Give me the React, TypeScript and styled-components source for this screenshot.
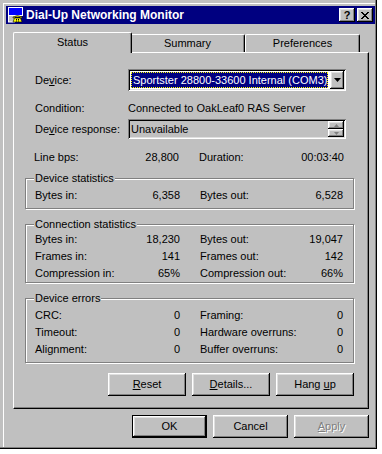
import React from "react";
import styled, { createGlobalStyle } from "styled-components";

const GlobalStyle = createGlobalStyle`
  html, body { margin: 0; padding: 0; background: #fff; }
  body {
    font-family: "Liberation Sans", Arial, sans-serif;
    font-size: 11px;
    color: #000;
  }
  * { box-sizing: border-box; }
`;

const raised = `
  box-shadow: inset -1px -1px #000, inset 1px 1px #fff,
    inset -2px -2px #808080, inset 2px 2px #dfdfdf;
`;
const sunken = `
  box-shadow: inset 1px 1px #808080, inset -1px -1px #fff,
    inset 2px 2px #000, inset -2px -2px #dfdfdf;
`;

const Window = styled.div`
  width: 377px;
  height: 449px;
  background: #c0c0c0;
  padding: 6px 2px 0 6px;
  display: flex;
  flex-direction: column;
  box-shadow: inset -1px -1px #000, inset -2px -2px #808080,
    inset 3px 3px #c0c0c0, inset 4px 4px #fff;
`;

const TitleBar = styled.div`
  height: 18px;
  background: #000080;
  color: #fff;
  display: flex;
  align-items: center;
  padding: 0 2px 0 2px;
`;

const TitleText = styled.span`
  flex: 1;
  margin-left: 2px;
  font-weight: bold;
  font-size: 12px;
  line-height: 18px;
  white-space: nowrap;
`;

const CaptionButton = styled.div<{ $gap?: boolean }>`
  width: 16px;
  height: 14px;
  background: #c0c0c0;
  color: #000;
  margin-left: ${(p) => (p.$gap ? 2 : 0)}px;
  display: flex;
  align-items: center;
  justify-content: center;
  font-weight: bold;
  font-size: 11px;
  line-height: 14px;
  ${raised}
`;

const Client = styled.div`
  flex: 1;
  display: flex;
  flex-direction: column;
  padding: 0 6px 0 7px;
`;

const TabStrip = styled.div`
  display: flex;
  align-items: flex-end;
  height: 20px;
  margin-top: 8px;
  padding-left: 2px;
  position: relative;
  z-index: 1;
`;

const Tab = styled.div<{ $active?: boolean }>`
  position: relative;
  z-index: ${(p) => (p.$active ? 2 : 1)};
  width: ${(p) => (p.$active ? 119 : 115)}px;
  height: ${(p) => (p.$active ? 21 : 18)}px;
  margin: ${(p) => (p.$active ? "0 -2px -1px -2px" : "0")};
  padding-bottom: ${(p) => (p.$active ? 1 : 0)}px;
  background: #c0c0c0;
  border-top: 1px solid #fff;
  border-left: 1px solid #fff;
  border-right: 1px solid #000;
  border-radius: 2px 2px 0 0;
  box-shadow: inset -1px 0 #808080;
  display: flex;
  align-items: center;
  justify-content: center;
  line-height: 13px;
`;

const Panel = styled.div`
  height: 357px;
  background: #c0c0c0;
  border-top: 1px solid #fff;
  border-left: 1px solid #fff;
  border-right: 1px solid #000;
  border-bottom: 1px solid #000;
  box-shadow: inset -1px -1px #808080;
  padding: 0 14px 0 11px;
  display: flex;
  flex-direction: column;
`;

const FieldRow = styled.div<{ $mt: number; $h: number }>`
  display: flex;
  align-items: center;
  height: ${(p) => p.$h}px;
  margin-top: ${(p) => p.$mt}px;
`;

const FieldLabel = styled.div`
  width: 103px;
  flex: none;
  padding-left: 10px;
  white-space: nowrap;
`;

const Combo = styled.div`
  width: 218px;
  height: 22px;
  padding: 2px;
  background: #fff;
  display: flex;
  ${sunken}
`;

const ComboField = styled.div`
  flex: 1;
  padding: 1px 2px 1px 1px;
  display: flex;
`;

const Selection = styled.div`
  flex: 1;
  background: #000080;
  color: #fff;
  border: 1px dotted #ffff00;
  padding-left: 1px;
  line-height: 14px;
  white-space: nowrap;
  overflow: hidden;
`;

const DropButton = styled.div`
  width: 16px;
  height: 18px;
  background: #c0c0c0;
  display: flex;
  align-items: center;
  justify-content: center;
  ${raised}
`;

const ReadOnlyBox = styled.div`
  width: 218px;
  height: 20px;
  padding: 2px 2px 2px 3px;
  background: #c0c0c0;
  display: flex;
  align-items: center;
  ${sunken}
`;

const ReadOnlyText = styled.span`
  flex: 1;
  line-height: 16px;
`;

const Spinner = styled.div`
  display: flex;
  flex-direction: column;
  width: 16px;
`;

const SpinButton = styled.div`
  height: 8px;
  background: #c0c0c0;
  display: flex;
  align-items: center;
  justify-content: center;
  ${raised}
`;

const StatGrid = styled.div<{ $mt?: number }>`
  display: grid;
  grid-template-columns: 145px 1fr;
  column-gap: 20px;
  margin-top: ${(p) => p.$mt ?? 0}px;
  padding: 0 10px 0 9px;
`;

const Pair = styled.div`
  display: flex;
  justify-content: space-between;
  height: 17px;
  line-height: 17px;
  white-space: nowrap;
`;

const Group = styled.section<{ $mt: number; $pb: number }>`
  margin-top: ${(p) => p.$mt}px;
  border: 1px solid #808080;
  box-shadow: inset 1px 1px #fff, 1px 1px #fff;
  padding: 0 0 ${(p) => p.$pb}px 0;
  display: flex;
  flex-direction: column;
`;

const GroupTitle = styled.div<{ $gap: number }>`
  align-self: flex-start;
  margin: -7px 0 ${(p) => p.$gap}px 8px;
  padding: 0 1px;
  background: #c0c0c0;
  line-height: 13px;
  white-space: nowrap;
`;

const ButtonRow = styled.div<{ $mt: number }>`
  display: flex;
  justify-content: flex-end;
  gap: 6px;
  margin-top: ${(p) => p.$mt}px;
`;

const Button = styled.div<{ $w: number; $default?: boolean; $disabled?: boolean }>`
  width: ${(p) => p.$w}px;
  height: 23px;
  background: #c0c0c0;
  display: flex;
  align-items: center;
  justify-content: center;
  line-height: 13px;
  white-space: pre;
  color: ${(p) => (p.$disabled ? "#808080" : "#000")};
  text-shadow: ${(p) => (p.$disabled ? "1px 1px #fff" : "none")};
  box-shadow: ${(p) =>
    p.$default
      ? "inset 0 0 0 1px #000, inset -2px -2px #000, inset 2px 2px #fff, inset -3px -3px #808080, inset 3px 3px #dfdfdf"
      : "inset -1px -1px #000, inset 1px 1px #fff, inset -2px -2px #808080, inset 2px 2px #dfdfdf"};
`;

const AppIcon = () => (
  <svg width="16" height="16" viewBox="0 0 16 16" style={{ flex: "none" }}>
    <rect x="0.5" y="0.5" width="14" height="8" fill="#0000ff" stroke="#fff" />
    <rect x="0.5" y="8.5" width="6" height="6.5" fill="#c0c0c0" stroke="#fff" />
    <path d="M5 10 Q9.5 7 14 10 L14 11 L12 11 L12 10 L7 10 L7 11 L5 11 Z" fill="#ffff00" stroke="#000" strokeWidth="0.6" />
    <path d="M6.5 11 L12.5 11 L14 15 L5 15 Z" fill="#ffff00" stroke="#000" strokeWidth="0.6" />
    <rect x="8" y="12" width="1" height="1" fill="#000" />
    <rect x="10" y="12" width="1" height="1" fill="#000" />
    <rect x="8" y="13.5" width="1" height="1" fill="#000" />
    <rect x="10" y="13.5" width="1" height="1" fill="#000" />
  </svg>
);

const CloseGlyph = () => (
  <svg width="8" height="7" viewBox="0 0 8 7">
    <path d="M0 0h2v1h1v1h2V1h1V0h2v1h-1v1h-1v1h-1v1h1v1h1v1h1v1h-2v-1h-1v-1h-2v1h-1v1H0v-1h1v-1h1V4h1V3H2V2H1V1H0z" fill="#000" />
  </svg>
);

const DownArrow = ({ color = "#000", w = 7 }: { color?: string; w?: number }) => (
  <svg width={w} height={Math.ceil(w / 2)} viewBox={`0 0 ${w} ${Math.ceil(w / 2)}`}>
    <path d={`M0 0H${w}L${w / 2} ${Math.ceil(w / 2)}Z`} fill={color} />
  </svg>
);

const UpArrow = ({ color = "#808080", w = 5 }: { color?: string; w?: number }) => (
  <svg width={w} height={Math.ceil(w / 2)} viewBox={`0 0 ${w} ${Math.ceil(w / 2)}`}>
    <path d={`M0 ${Math.ceil(w / 2)}H${w}L${w / 2} 0Z`} fill={color} />
  </svg>
);

type Stat = [string, string];

const StatRows = ({ rows }: { rows: [Stat, Stat][] }) => (
  <StatGrid>
    {rows.map(([l, r], i) => (
      <React.Fragment key={i}>
        <Pair>
          <span>{l[0]}</span>
          <span>{l[1]}</span>
        </Pair>
        <Pair>
          <span>{r[0]}</span>
          <span>{r[1]}</span>
        </Pair>
      </React.Fragment>
    ))}
  </StatGrid>
);

export default function App() {
  return (
    <>
      <GlobalStyle />
      <Window>
        <TitleBar>
          <AppIcon />
          <TitleText>Dial-Up Networking Monitor</TitleText>
          <CaptionButton>?</CaptionButton>
          <CaptionButton $gap>
            <CloseGlyph />
          </CaptionButton>
        </TitleBar>
        <Client>
          <TabStrip>
            <Tab $active>Status</Tab>
            <Tab>Summary</Tab>
            <Tab>Preferences</Tab>
          </TabStrip>
          <Panel>
            <FieldRow $mt={16} $h={22}>
              <FieldLabel>
                De<u>v</u>ice:
              </FieldLabel>
              <Combo>
                <ComboField>
                  <Selection>Sportster 28800-33600 Internal (COM3)</Selection>
                </ComboField>
                <DropButton>
                  <DownArrow />
                </DropButton>
              </Combo>
            </FieldRow>
            <FieldRow $mt={8} $h={17}>
              <FieldLabel>Condition:</FieldLabel>
              <span>Connected to OakLeaf0 RAS Server</span>
            </FieldRow>
            <FieldRow $mt={3} $h={20}>
              <FieldLabel>
                De<u>v</u>ice response:
              </FieldLabel>
              <ReadOnlyBox>
                <ReadOnlyText>Unavailable</ReadOnlyText>
                <Spinner>
                  <SpinButton>
                    <UpArrow />
                  </SpinButton>
                  <SpinButton>
                    <DownArrow color="#808080" w={5} />
                  </SpinButton>
                </Spinner>
              </ReadOnlyBox>
            </FieldRow>
            <StatGrid $mt={10}>
              <Pair>
                <span>Line bps:</span>
                <span>28,800</span>
              </Pair>
              <Pair>
                <span>Duration:</span>
                <span>00:03:40</span>
              </Pair>
            </StatGrid>
            <Group $mt={12} $pb={4}>
              <GroupTitle $gap={2}>Device statistics</GroupTitle>
              <StatRows rows={[[["Bytes in:", "6,358"], ["Bytes out:", "6,528"]]]} />
            </Group>
            <Group $mt={15} $pb={0}>
              <GroupTitle $gap={0}>Connection statistics</GroupTitle>
              <StatRows
                rows={[
                  [["Bytes in:", "18,230"], ["Bytes out:", "19,047"]],
                  [["Frames in:", "141"], ["Frames out:", "142"]],
                  [["Compression in:", "65%"], ["Compression out:", "66%"]],
                ]}
              />
            </Group>
            <Group $mt={15} $pb={4}>
              <GroupTitle $gap={2}>Device errors</GroupTitle>
              <StatRows
                rows={[
                  [["CRC:", "0"], ["Framing:", "0"]],
                  [["Timeout:", "0"], ["Hardware overruns:", "0"]],
                  [["Alignment:", "0"], ["Buffer overruns:", "0"]],
                ]}
              />
            </Group>
            <ButtonRow $mt={10}>
              <Button $w={78}>
                <span>
                  <u>R</u>eset
                </span>
              </Button>
              <Button $w={78}>
                <span>
                  <u>D</u>etails...
                </span>
              </Button>
              <Button $w={78}>
                <span>
                  Hang <u>u</u>p
                </span>
              </Button>
            </ButtonRow>
          </Panel>
          <ButtonRow $mt={6}>
            <Button $w={75} $default>
              OK
            </Button>
            <Button $w={75}>Cancel</Button>
            <Button $w={75} $disabled>
              <span>
                <u>A</u>pply
              </span>
            </Button>
          </ButtonRow>
        </Client>
      </Window>
    </>
  );
}
